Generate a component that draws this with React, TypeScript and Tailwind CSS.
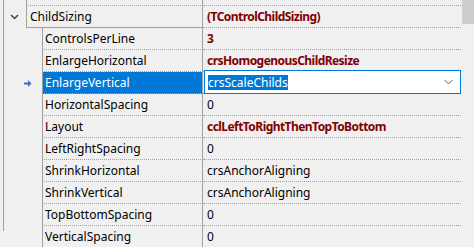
const rows = [
  { name: "ControlsPerLine", value: "3", bold: true },
  { name: "EnlargeHorizontal", value: "crsHomogenousChildResize", bold: true },
  { name: "EnlargeVertical", value: "crsScaleChilds", selected: true },
  { name: "HorizontalSpacing", value: "0" },
  { name: "Layout", value: "cclLeftToRightThenTopToBottom", bold: true },
  { name: "LeftRightSpacing", value: "0" },
  { name: "ShrinkHorizontal", value: "crsAnchorAligning" },
  { name: "ShrinkVertical", value: "crsAnchorAligning" },
  { name: "TopBottomSpacing", value: "0" },
  { name: "VerticalSpacing", value: "0" },
];

const App = () => {
  return (
    <div
      className="flex w-[474px] h-[247px] overflow-hidden bg-[#f0f0f0] text-[12px] text-black"
      style={{ fontFamily: '"Noto Sans", "Liberation Sans", sans-serif' }}
    >
      {/* grid */}
      <div className="w-[461px] pl-[3px] overflow-hidden">
        <div className="h-full border-l border-[#a0a0a0]">
          {/* partial row above */}
          <div className="flex h-[22px] -mt-[16px]">
            <div className="w-[22px] shrink-0"></div>
            <div className="flex items-center w-[177px] shrink-0 pl-[3px] pb-[3px] border-l border-r border-b border-[#a0a0a0] [border-bottom-style:dotted]">
              Caption
            </div>
            <div className="flex items-center flex-1 pl-[4px] pb-[3px] border-b border-dotted border-[#a0a0a0]">
              Form1
            </div>
          </div>

          {/* ChildSizing */}
          <div className="flex h-[22px]">
            <div className="w-[22px] shrink-0 flex items-center pl-[6px]">
              <svg width="9" height="6" viewBox="0 0 9 6">
                <path d="M1 1 L4.5 4.5 L8 1" fill="none" stroke="#404040" strokeWidth="1.5" />
              </svg>
            </div>
            <div className="flex items-center w-[177px] shrink-0 pl-[3px] border-l border-r border-b border-[#a0a0a0]">
              ChildSizing
            </div>
            <div className="flex items-center flex-1 pl-[4px] font-bold tracking-[-0.55px] text-[#800000] border-b border-dotted border-[#a0a0a0]">
              (TControlChildSizing)
            </div>
          </div>

          {rows.map((r) => (
            <div key={r.name} className="flex h-[22px]">
              <div className="w-[38px] shrink-0 flex items-center pl-[20px]">
                {r.selected && (
                  <svg width="8" height="7" viewBox="0 0 8 7">
                    <path d="M0 2.5 H4 V0 L7.5 3.5 L4 7 V4.5 H0 Z" fill="#3d6fc4" />
                  </svg>
                )}
              </div>
              <div
                className={`flex items-center w-[161px] shrink-0 pl-[2px] border-l border-r border-b border-[#a0a0a0] [border-bottom-style:dotted] ${
                  r.selected ? "bg-[#0078d7] text-white" : ""
                }`}
              >
                {r.name}
              </div>
              <div
                className={`relative flex items-center flex-1 pl-[4px] border-b border-dotted border-[#a0a0a0] ${
                  r.bold ? "font-bold tracking-[-0.55px] text-[#800000]" : ""
                }`}
              >
                {r.selected ? (
                  <div className="absolute left-[1px] -top-[2px] right-0 h-[24px] flex items-center justify-between pl-[3px] pr-[7px] bg-white border border-[#0078d7]">
                    <span className="bg-[#0078d7] text-white leading-[15px]">{r.value}</span>
                    <svg width="9" height="6" viewBox="0 0 9 6">
                      <path d="M0.5 1 L4.5 5 L8.5 1" fill="none" stroke="#606060" strokeWidth="1" />
                    </svg>
                  </div>
                ) : (
                  r.value
                )}
              </div>
            </div>
          ))}
        </div>
      </div>

      {/* scrollbar */}
      <div className="ml-[1px] w-[12px] flex flex-col">
        <div className="h-[24px] bg-[#cdcdcd]"></div>
      </div>
    </div>
  );
};

export default App;
